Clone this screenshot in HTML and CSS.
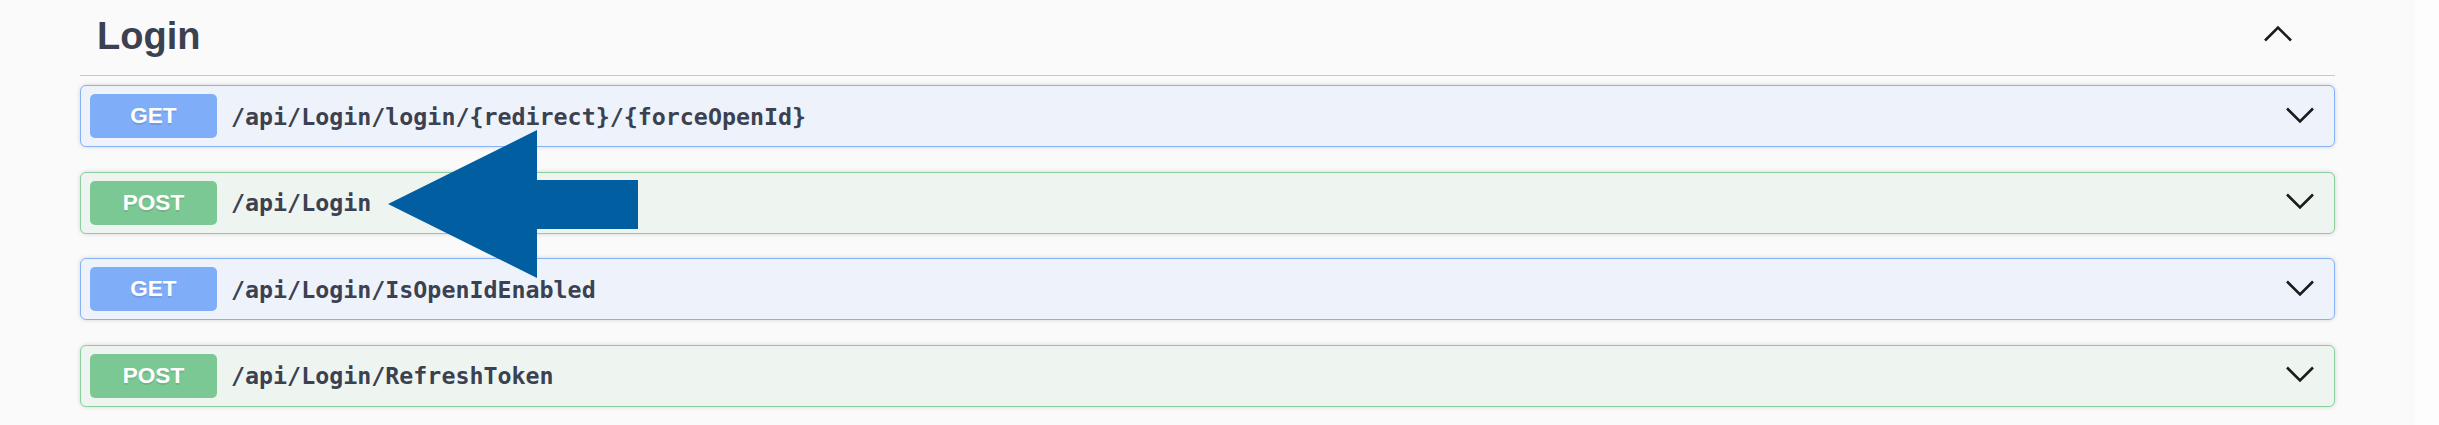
FILE: index.html
```html
<!DOCTYPE html>
<html lang="en">
<head>
<meta charset="utf-8">
<title>Login</title>
<link rel="stylesheet" href="styles.css">
</head>
<body>
<div class="page">
  <main class="main">
    <section class="tag-section">
      <header class="tag-header">
        <h3 class="tag-title">Login</h3>
        <svg class="chev-up" width="30" height="18" viewBox="0 0 30 18" aria-hidden="true">
          <polyline points="2,15.5 15,2.5 28,15.5" fill="none" stroke="#1b1b1b" stroke-width="2.6"/>
        </svg>
      </header>
      <div class="ops">
        <div class="op op-get">
          <span class="method">GET</span>
          <span class="path">/api/Login/login/{redirect}/{forceOpenId}</span>
          <svg class="chev-down" width="30" height="18" viewBox="0 0 30 18" aria-hidden="true">
            <polyline points="2,2.5 15,15.5 28,2.5" fill="none" stroke="#1b1b1b" stroke-width="2.6"/>
          </svg>
        </div>
        <div class="op op-post">
          <span class="method">POST</span>
          <span class="path">/api/Login</span>
          <svg class="chev-down" width="30" height="18" viewBox="0 0 30 18" aria-hidden="true">
            <polyline points="2,2.5 15,15.5 28,2.5" fill="none" stroke="#1b1b1b" stroke-width="2.6"/>
          </svg>
        </div>
        <div class="op op-get">
          <span class="method">GET</span>
          <span class="path">/api/Login/IsOpenIdEnabled</span>
          <svg class="chev-down" width="30" height="18" viewBox="0 0 30 18" aria-hidden="true">
            <polyline points="2,2.5 15,15.5 28,2.5" fill="none" stroke="#1b1b1b" stroke-width="2.6"/>
          </svg>
        </div>
        <div class="op op-post">
          <span class="method">POST</span>
          <span class="path">/api/Login/RefreshToken</span>
          <svg class="chev-down" width="30" height="18" viewBox="0 0 30 18" aria-hidden="true">
            <polyline points="2,2.5 15,15.5 28,2.5" fill="none" stroke="#1b1b1b" stroke-width="2.6"/>
          </svg>
        </div>
      </div>
    </section>
  </main>
  <div class="edge"></div>
</div>
<svg class="arrow" width="252" height="150" viewBox="0 0 252 150" aria-hidden="true">
  <polygon points="0,74 149,0 149,50 250,50 250,99 149,99 149,148" fill="#005ea1"/>
</svg>
</body>
</html>
```

FILE: styles.css
```css
html, body {
  margin: 0;
  padding: 0;
}
body {
  width: 2439px;
  height: 425px;
  overflow: hidden;
  position: relative;
  background: #fafafa;
  font-family: "Liberation Sans", Arial, sans-serif;
}
.page {
  display: flex;
  height: 425px;
}
.main {
  width: 2415px;
  background: #fafafa;
}
.edge {
  flex: 1;
  background: #fdfdfd;
}
.tag-section {
  margin-left: 80px;
  width: 2255px;
}
.tag-header {
  display: flex;
  justify-content: space-between;
  align-items: flex-start;
  height: 75px;
  border-bottom: 1px solid #c8c8c9;
  padding: 0 42px 0 17px;
  box-sizing: content-box;
}
.tag-title {
  margin: 17px 0 0 0;
  font-size: 38px;
  line-height: 38px;
  font-weight: 700;
  color: #3b4151;
}
.chev-up {
  margin-top: 25px;
  display: block;
}
.ops {
  display: flex;
  flex-direction: column;
  gap: 24.67px;
  padding-top: 9px;
}
.op {
  display: flex;
  align-items: center;
  height: 62px;
  box-sizing: border-box;
  border-radius: 6px;
  padding: 0 19px 0 9px;
  box-shadow: 0 0 4px rgba(0, 0, 0, 0.16);
}
.op-get {
  background: #eef3fb;
  border: 1.6px solid #86b3f8;
}
.op-post {
  background: #eef5f0;
  border: 1.6px solid #8ccf9e;
}
.method {
  flex: none;
  width: 127px;
  height: 44px;
  border-radius: 5px;
  display: flex;
  align-items: center;
  justify-content: center;
  color: #ffffff;
  font-size: 22.5px;
  font-weight: 700;
  text-shadow: 0 1.5px 0 rgba(0, 0, 0, 0.1);
}
.op-get .method {
  background: #7fadf8;
}
.op-post .method {
  background: #7cc894;
}
.path {
  flex: 1;
  padding-left: 14px;
  font-family: "DejaVu Sans Mono", "Liberation Mono", monospace;
  font-size: 23.3px;
  font-weight: 700;
  color: #3b4151;
}
.chev-down {
  flex: none;
  display: block;
  margin-top: -3px;
}
.arrow {
  position: absolute;
  left: 388px;
  top: 130px;
}
```
